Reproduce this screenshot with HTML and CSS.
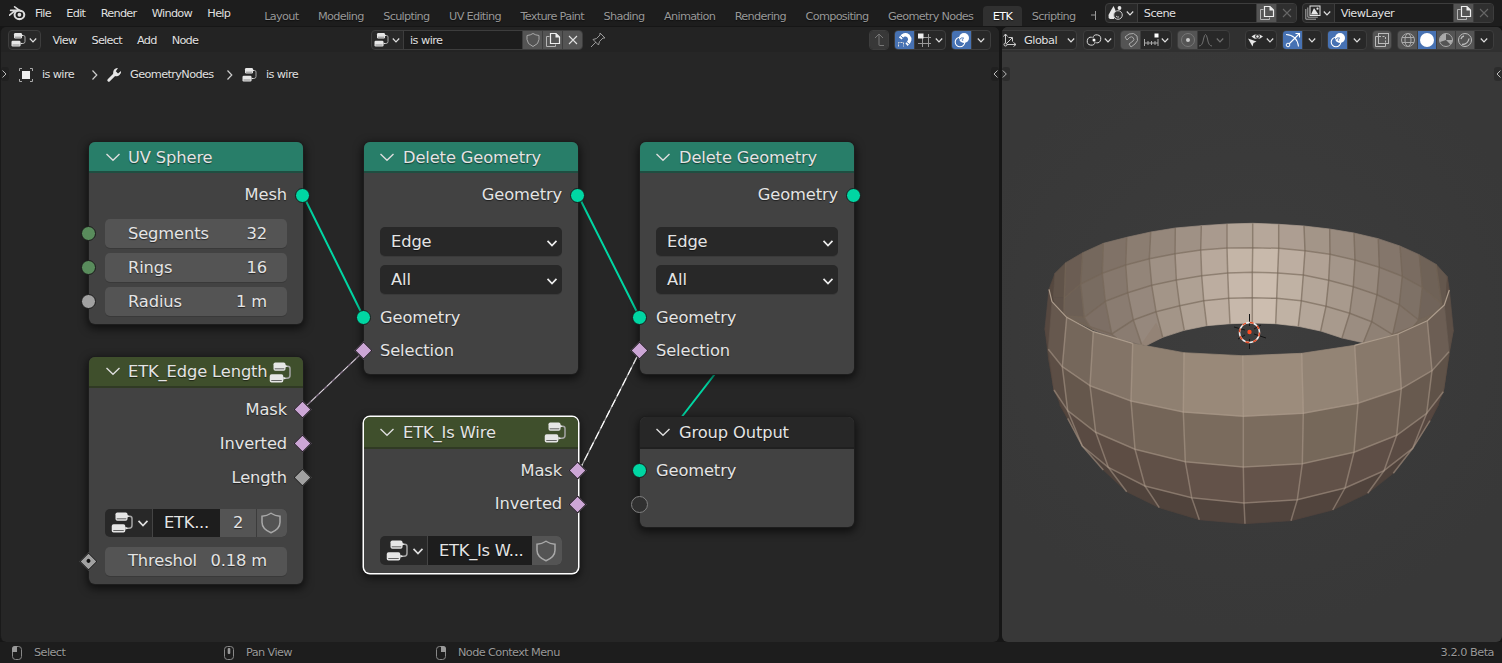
FILE: index.html
```html
<!DOCTYPE html>
<html lang="en">
<head>
<meta charset="utf-8">
<title>Geometry Nodes</title>
<link rel="stylesheet" href="styles.css">
</head>
<body>
<svg class="defs" width="0" height="0">
  <symbol id="tree" viewBox="0 0 16 16"><path d="M11 3.500h1.500q1.500 0 1.500 1.500v4.500q0 2-2 2h-2" fill="none" stroke="#a5a5a5"/><path d="M10.500 2.500l2 1-2 1zM9.500 10.500l2 1-2 1z" fill="#e6e6e6"/><rect x="3" y="1" width="8" height="5.500" rx="1.200" fill="#e6e6e6"/><rect x=".5" y="8.800" width="9" height="5.600" rx="1.200" fill="#e6e6e6"/><path d="M3.800 5.200h6.400M1.500 13h7" stroke="#555" stroke-width=".6"/></symbol>
  <symbol id="down" viewBox="0 0 10 10"><path d="M1.800 3.500L5 6.800 8.200 3.500" fill="none" stroke="currentColor" stroke-width="1.200"/></symbol>
  <symbol id="thin" viewBox="0 0 18 18"><path d="M2.500 6L9 12.300 15.500 6" fill="none" stroke="currentColor" stroke-width="1.400"/></symbol>
  <symbol id="shield" viewBox="0 0 16 16"><path d="M8 1.500q2.500 1.700 6 2v4q0 4.500-6 7-6-2.500-6-7v-4q3.500-.3 6-2z" fill="none" stroke="#a8a8a8" stroke-width="1"/></symbol>
  <symbol id="copy" viewBox="0 0 16 16"><path d="M4.500 4.500h-3v10h9v-2" fill="none" stroke="#b5b5b5"/><path d="M5.500 1.500h5.500l3.500 3.500v6.500h-9z" fill="none" stroke="#eee" stroke-width="1.200"/><path d="M10.500 1v4.500h4.500z" fill="#eee"/></symbol>
  <symbol id="cross" viewBox="0 0 16 16"><path d="M4 4l8 8M12 4l-8 8" stroke="currentColor" stroke-width="1.100"/></symbol>
  <symbol id="overlay" viewBox="0 0 16 16"><circle cx="10" cy="6" r="5" fill="#fff"/><circle cx="6" cy="10" r="4.800" fill="none" stroke="#fff" stroke-width="1.100"/><path d="M5.500 7.500Q7.500 5 10 6.200" fill="none" stroke="#4772b3"/><circle cx="8.500" cy="8" r=".8" fill="#4772b3"/></symbol>
</svg>

<header class="topbar">
  <svg class="logo" viewBox="0 0 16 16"><path d="M5.300 1.700l6 4.400M.5 9.500l5.600-4.400h4M1.500 5.100h6" fill="none" stroke="#ddd" stroke-width="1.500" stroke-linecap="round"/><ellipse cx="9.800" cy="9.200" rx="4.600" ry="4.100" fill="none" stroke="#ddd" stroke-width="1.900"/><circle cx="9.800" cy="9.200" r="1.800" fill="#ddd"/></svg>
  <nav class="menus"><span>File</span><span>Edit</span><span>Render</span><span>Window</span><span>Help</span></nav>
  <nav class="tabs"><span>Layout</span><span>Modeling</span><span>Sculpting</span><span>UV Editing</span><span>Texture Paint</span><span>Shading</span><span>Animation</span><span>Rendering</span><span>Compositing</span><span>Geometry Nodes</span><span class="current">ETK</span><span>Scripting</span><svg class="plus" viewBox="0 0 6 16"><path d="M0 8h5M4.500 4v9" stroke="#999" fill="none"/></svg></nav>
  <div class="idblocks">
    <div class="group scene"><span class="cell pick"><svg class="ic" viewBox="0 0 16 16"><path d="M5.500 1Q8 5 8 9l-2 5H2Q0 13 .5 10 2 7 5.500 1z" fill="#e6e6e6"/><circle cx="11.500" cy="3" r="1.900" fill="#e6e6e6"/><circle cx="10" cy="10" r="4.300" fill="#303030" stroke="#ccc"/><path d="M8 11q1 1.500 3 1" stroke="#ccc" fill="none"/></svg><svg class="dn"><use href="#down"/></svg></span><span class="cell name">Scene</span><span class="cell lit"><svg class="ic"><use href="#copy"/></svg></span><span class="cell dim"><svg class="ic"><use href="#cross"/></svg></span></div>
    <div class="group scene"><span class="cell pick"><svg class="ic" viewBox="0 0 16 16"><path d="M.8 4v10.200H11M2.800 2.500v9.700h10" fill="none" stroke="#aaa"/><rect x="5" y="1" width="10" height="9.500" fill="none" stroke="#e6e6e6"/><path d="M6 9.500L9 3l4.500 6.500z" fill="#e6e6e6"/><circle cx="12.500" cy="3.700" r="1.100" fill="#e6e6e6"/></svg><svg class="dn"><use href="#down"/></svg></span><span class="cell name">ViewLayer</span><span class="cell lit"><svg class="ic"><use href="#copy"/></svg></span><span class="cell dim"><svg class="ic"><use href="#cross"/></svg></span></div>
  </div>
</header>

<main class="workspace">
  <section class="area nodes">
    <div class="bar">
      <div class="bar-left"><div class="group"><span class="cell pick"><svg class="ic"><use href="#tree"/></svg><svg class="dn"><use href="#down"/></svg></span></div><nav class="menus"><span>View</span><span>Select</span><span>Add</span><span>Node</span></nav></div>
      <div class="group ident"><span class="cell pick"><svg class="ic"><use href="#tree"/></svg><svg class="dn"><use href="#down"/></svg></span><span class="cell name">is wire</span><span class="cell lit"><svg class="ic"><use href="#shield"/></svg></span><span class="cell lit"><svg class="ic"><use href="#copy"/></svg></span><span class="cell lit"><svg class="ic"><use href="#cross"/></svg></span></div>
      <svg class="ic pin" viewBox="0 0 16 16"><path d="M1 15l5-5M3 7.500l5.500 5.500 1-3.500 3.500-3.500h2L10 1v2L6.500 6.500z" fill="none" stroke="#999"/></svg>
      <div class="bar-right">
        <div class="group"><span class="cell up"><svg class="ic" viewBox="0 0 16 16"><path d="M13 13.500H8.500Q8 13.500 8 13V2M4 6l4-4 4 4" fill="none" stroke="#777"/></svg></span></div>
        <div class="group"><span class="cell on"><svg class="ic" viewBox="0 0 16 16"><path d="M3.300 6.500Q7 .8 11.300 3.800 15 8 9.500 12.600" fill="none" stroke="#fff" stroke-width="3.400"/><path d="M3.300 3.500l3.200 3M9 9.500l3.500 3" stroke="#4772b3" stroke-width="1"/><path d="M1.500 14.500v-4h5v4" fill="none" stroke="#ddd" stroke-dasharray="2 1"/></svg></span><span class="cell pick"><svg class="ic" viewBox="0 0 16 16"><path d="M1 5.500h13M1 11.500h13M5.500 2v13M11.500 2v13" stroke="#999"/><rect x="1" y="1.500" width="5.500" height="5" fill="#eee"/></svg><svg class="dn"><use href="#down"/></svg></span></div>
        <div class="group"><span class="cell on"><svg class="ic"><use href="#overlay"/></svg></span><span class="cell"><svg class="dn"><use href="#down"/></svg></span></div>
      </div>
    </div>
    <div class="crumbs">
      <svg class="edge-toggle" viewBox="0 0 8 14"><path d="M1.500 3.500L5 7l-3.500 3.500" fill="none" stroke="#bbb"/></svg>
      <svg class="ic" viewBox="0 0 16 16"><path d="M1.500 4V1.500H4M12 1.500h2.500V4M1.500 12v2.500H4M12 14.500h2.500V12" fill="none" stroke="#aaa"/><rect x="4" y="4" width="8" height="8" fill="#eee"/></svg><span class="c1">is wire</span>
      <svg class="sep" viewBox="0 0 8 12"><path d="M1.500 1.500L5.800 6l-4.300 4.500" fill="none" stroke="#ccc" stroke-width="1.200"/></svg>
      <svg class="ic" viewBox="0 0 16 16"><path d="M2.800 13.200l6-6" stroke="#e6e6e6" stroke-width="3" stroke-linecap="round"/><path d="M12 1Q8 1 7.300 4.500T9 9t4.500-1T15 4l-3 2.500L9.800 4.300z" fill="#e6e6e6"/></svg><span class="c2">GeometryNodes</span>
      <svg class="sep" viewBox="0 0 8 12"><path d="M1.500 1.500L5.800 6l-4.300 4.500" fill="none" stroke="#ccc" stroke-width="1.200"/></svg>
      <svg class="ic"><use href="#tree"/></svg><span>is wire</span>
      <svg class="edge-toggle right" viewBox="0 0 8 14"><path d="M6.500 3.500L3 7l3.500 3.500" fill="none" stroke="#bbb"/></svg>
    </div>

    <svg class="links" viewBox="0 0 999 615">
      <g transform="translate(0 -27)" fill="none">
        <path d="M303 195L364 318M578 195L640 318M853 195L640 471" stroke="#00d6a3" stroke-width="2"/>
        <path d="M303 409L364 351" stroke="#8d7b91" stroke-width="1.400"/><path d="M303 409L364 351" stroke="#ddd" stroke-width="1" stroke-dasharray="7 4"/>
        <path d="M579 471L640 351" stroke="#aaa" stroke-width="1.300"/><path d="M579 471L640 351" stroke="#fff" stroke-width="1.200" stroke-dasharray="8 4"/>
      </g>
    </svg>

    <article class="node geo n-sphere">
      <h2><svg class="fold"><use href="#thin"/></svg>UV Sphere</h2>
      <div class="row out">Mesh<i class="sock r green"></i></div>
      <div class="fields">
        <div class="field"><span>Segments</span><b>32</b><i class="sock l int"></i></div>
        <div class="field"><span>Rings</span><b>16</b><i class="sock l int"></i></div>
        <div class="field"><span>Radius</span><b>1 m</b><i class="sock l grey"></i></div>
      </div>
    </article>

    <article class="node geo n-del1">
      <h2><svg class="fold"><use href="#thin"/></svg>Delete Geometry</h2>
      <div class="row out">Geometry<i class="sock r green"></i></div>
      <div class="selects"><div class="select">Edge<svg><use href="#down"/></svg></div><div class="select">All<svg><use href="#down"/></svg></div></div>
      <div class="row">Geometry<i class="sock l green"></i></div>
      <div class="row">Selection<i class="dia l pink"></i></div>
    </article>

    <article class="node geo n-del2">
      <h2><svg class="fold"><use href="#thin"/></svg>Delete Geometry</h2>
      <div class="row out">Geometry<i class="sock r green"></i></div>
      <div class="selects"><div class="select">Edge<svg><use href="#down"/></svg></div><div class="select">All<svg><use href="#down"/></svg></div></div>
      <div class="row">Geometry<i class="sock l green"></i></div>
      <div class="row">Selection<i class="dia l pink"></i></div>
    </article>

    <article class="node grp n-edge">
      <h2><svg class="fold"><use href="#thin"/></svg>ETK_Edge Length<svg class="badge"><use href="#tree"/></svg></h2>
      <div class="row out">Mask<i class="dia r pink"></i></div>
      <div class="row out">Inverted<i class="dia r pink"></i></div>
      <div class="row out">Length<i class="dia r grey"></i></div>
      <div class="datablock"><span class="d-pick"><svg class="big"><use href="#tree"/></svg><svg class="dn"><use href="#down"/></svg></span><span class="d-name">ETK...</span><span class="d-users">2</span><span class="d-shield"><svg class="big"><use href="#shield"/></svg></span></div>
      <div class="field"><span>Threshol</span><b>0.18 m</b><i class="dia l grey dot"></i></div>
    </article>

    <article class="node grp selected n-wire">
      <h2><svg class="fold"><use href="#thin"/></svg>ETK_Is Wire<svg class="badge"><use href="#tree"/></svg></h2>
      <div class="row out">Mask<i class="dia r pink"></i></div>
      <div class="row out">Inverted<i class="dia r pink"></i></div>
      <div class="datablock"><span class="d-pick"><svg class="big"><use href="#tree"/></svg><svg class="dn"><use href="#down"/></svg></span><span class="d-name">ETK_Is W...</span><span class="d-shield"><svg class="big"><use href="#shield"/></svg></span></div>
    </article>

    <article class="node io n-out">
      <h2><svg class="fold"><use href="#thin"/></svg>Group Output</h2>
      <div class="row">Geometry<i class="sock l green"></i></div>
      <div class="row"><i class="sock l empty"></i></div>
    </article>
  </section>

  <section class="area view3d">
    <div class="bar">
      <div class="group orient"><span class="cell"><svg class="ic" viewBox="0 0 16 16"><path d="M3.500 2v10.500H14M3.500 12.500L10 6M1.500 4.500l2-2.500 2 2.500M11.500 10.500l2.500 2-2.500 2M6.500 5.500h4v4" fill="none" stroke="#ccc"/><circle cx="3.500" cy="12.500" r="1.500" fill="#303030" stroke="#ccc"/></svg><span class="global">Global</span><svg class="dn"><use href="#down"/></svg></span></div>
      <div class="group pivot"><span class="cell pick"><svg class="ic" viewBox="0 0 16 16"><path d="M6.800 6.200a4 4 0 1 1 3.400 4.600M9.200 9.800a4 4 0 1 1-3.400-4.600" fill="none" stroke="#ddd"/><circle cx="8" cy="8" r="1.500" fill="#fff"/></svg><svg class="dn"><use href="#down"/></svg></span></div>
      <div class="group snap"><span class="cell lit"><svg class="ic" viewBox="0 0 16 16"><path d="M2 5l4-3q5-2 8 2 2 5-2 8l-4 3-2-3 4-3q2-1.500 0-3.500-1.500-1.500-3.500 0L4 8z" fill="none" stroke="#aaa"/></svg></span><span class="cell pick"><svg class="ic" viewBox="0 0 16 16"><path d="M1.500 7v7M5 9v4M8.500 9v4M12 9v4M15 7v7M1.500 11H15" stroke="#aaa"/><rect x="11.500" y="1.500" width="4" height="4" fill="#fff"/></svg><svg class="dn"><use href="#down"/></svg></span></div>
      <div class="group"><span class="cell lit"><svg class="ic" viewBox="0 0 16 16"><circle cx="8" cy="8" r="6.500" fill="none" stroke="#777"/><circle cx="8" cy="8" r="2" fill="#ccc"/></svg></span><span class="cell pick faded"><svg class="ic bell" viewBox="0 0 16 16"><path d="M1 14q3.500 0 4.500-7 2-9 4 0 1 7 4.500 7" fill="none" stroke="#ddd"/></svg><svg class="dn"><use href="#down"/></svg></span></div>
      <div class="group vis"><span class="cell pick"><svg class="ic" viewBox="0 0 16 16"><path d="M3.500 4.500Q9 0 15 4.500 9 9.500 3.500 4.500z" fill="#e6e6e6"/><circle cx="9.500" cy="4.500" r="2.400" fill="#333"/><circle cx="9.500" cy="4.500" r="1.200" fill="#eee"/><path d="M0 6.500l8.500 3-3 1.500-1 3.500z" fill="#e6e6e6"/></svg><svg class="dn"><use href="#down"/></svg></span></div>
      <div class="group"><span class="cell on"><svg class="ic" viewBox="0 0 16 16"><path d="M1 2.500Q12 3 13.500 14.500M4 12L14.500 1.500M10.500 1.500h4v4" fill="none" stroke="#fff" stroke-width="1.100"/><circle cx="3" cy="13" r="1.800" fill="#4772b3" stroke="#fff"/></svg></span><span class="cell"><svg class="dn"><use href="#down"/></svg></span></div>
      <div class="group"><span class="cell on"><svg class="ic"><use href="#overlay"/></svg></span><span class="cell"><svg class="dn"><use href="#down"/></svg></span></div>
      <div class="group xray"><span class="cell lit"><svg class="ic" viewBox="0 0 16 16"><rect x="4.500" y="1.500" width="10" height="10" fill="none" stroke="#bbb"/><path d="M4 4.500H1.500v10h10V12" fill="none" stroke="#bbb"/><path d="M5 4.500h6.500v6.500" fill="none" stroke="#bbb" stroke-dasharray="2 1.500"/></svg></span></div>
      <div class="group shade"><span class="cell lit"><svg class="ic" viewBox="0 0 16 16"><g fill="none" stroke="#aaa"><circle cx="8" cy="8" r="6.500"/><ellipse cx="8" cy="8" rx="3" ry="6.500"/><path d="M2 5.500h12M2 10.500h12"/></g></svg></span><span class="cell on"><svg class="ic" viewBox="0 0 16 16"><circle cx="8" cy="8" r="7" fill="#fff"/></svg></span><span class="cell lit"><svg class="ic" viewBox="0 0 16 16"><circle cx="8" cy="8" r="6.500" fill="#555" stroke="#aaa"/><path d="M8 8V1.500A6.500 6.500 0 0 0 2 10L8 8l4.500 4.500A6.500 6.500 0 0 0 14.500 8z" fill="#aaa"/></svg></span><span class="cell lit"><svg class="ic" viewBox="0 0 16 16"><circle cx="8" cy="8" r="6.500" fill="#555" stroke="#bbb"/><path d="M4 7a4 4 0 0 1 3-3M5 12.500q6 0 7-6" fill="none" stroke="#bbb" stroke-width="1.300"/></svg></span><span class="cell"><svg class="dn"><use href="#down"/></svg></span></div>
    </div>
    <svg class="edge-toggle vleft" viewBox="0 0 8 14"><path d="M.8 3.500L4.300 7 .8 10.500" fill="none" stroke="#bbb"/></svg>
    <svg class="edge-toggle vright" viewBox="0 0 8 14"><path d="M6.500 3.500L3 7l3.500 3.500" fill="none" stroke="#bbb"/></svg>
    <svg class="scene3d" viewBox="1002 27 500 615">
      <g id="mesh"></g>
      <g class="cursor3d"><path d="M1249.500 314v12M1249.500 339v10M1234 327l11 3M1254 334l12 4M1238 339l7-4M1254 329l7-4"/><circle class="ring" cx="1249.500" cy="332.500" r="10"/><circle class="ring dash" cx="1249.500" cy="332.500" r="10"/><circle class="mid" cx="1249.500" cy="332" r="2.200"/></g>
    </svg>
  </section>
</main>

<footer class="status">
  <span class="hint"><svg viewBox="0 0 12 16"><rect x="1.500" y="1.500" width="9" height="13" rx="3" fill="none" stroke="#888"/><path d="M1 7V4q0-3 3-3h2v6z" fill="#999"/></svg>Select</span>
  <span class="hint"><svg viewBox="0 0 12 16"><rect x="1.500" y="1.500" width="9" height="13" rx="3" fill="none" stroke="#888"/><rect x="4.700" y="3" width="2.600" height="6" rx="1" fill="#999"/></svg>Pan View</span>
  <span class="hint"><svg viewBox="0 0 12 16"><rect x="1.500" y="1.500" width="9" height="13" rx="3" fill="none" stroke="#888"/><path d="M6 1h2q3 0 3 3v3H6z" fill="#999"/></svg>Node Context Menu</span>
  <span class="version">3.2.0 Beta</span>
</footer>
<script src="mesh.js"></script>
</body>
</html>
```
FILE: styles.css
```css
* { box-sizing: border-box; }
body { margin: 0; width: 1502px; height: 663px; overflow: hidden; background: #161616; color: #e0e0e0; font: 11.300px/14px "DejaVu Sans", sans-serif; letter-spacing: -.72px; text-shadow: 0 1px 1px #0008; display: flex; flex-direction: column; }
svg { display: block; flex: none; }
.defs { position: absolute; }
.ic { width: 16px; height: 16px; }
.dn { width: 10px; height: 10px; color: #ddd; }

.topbar { height: 26px; flex: none; background: #1d1d1d; display: flex; }
.logo { width: 17px; height: 17px; margin: 5px 0 0 9px; }
.menus { display: flex; gap: 15px; white-space: nowrap; padding-top: 1px; }
.topbar .menus { width: 228px; padding: 7px 0 0 9px; gap: 15.300px; }
.tabs { display: flex; width: 844px; overflow: hidden; padding-top: 6px; color: #989898; white-space: nowrap; }
.tabs span { padding: 4px 9.800px 0; height: 20px; }
.tabs span:first-child { padding-left: 10.300px; }
.tabs .current { background: #303030; color: #fff; border-radius: 4px 4px 0 0; }
.plus { width: 6px; height: 16px; margin-left: 6px; margin-top: 1px; }
.idblocks { display: flex; gap: 5px; padding-top: 3px; margin-left: 7px; }

.group { display: flex; height: 20px; flex: none; border: 1px solid #3d3d3d; border-radius: 4px; background: #282828; overflow: hidden; }
.cell { display: flex; align-items: center; justify-content: center; width: 19px; border-left: 1px solid #3d3d3d; }
.cell:first-child { border-left: 0; width: 19px; }
.cell.pick, .cell.pick:first-child { width: 31px; gap: 1px; }
.cell.name { background: #1d1d1d; justify-content: flex-start; padding-left: 6px; padding-top: 1px; width: 120px; letter-spacing: -.55px; }
.cell.lit { background: #545454; }
.cell.on { background: #4772b3; }
.cell.dim { background: #2f2f2f; color: #666; }
.cell.up:first-child { background: #383838; width: 18px; }
.faded .ic, .faded .dn { opacity: .4; }
.scene { width: 192px; }
.scene .lit, .scene .dim, .ident .lit { width: 20px; }

.workspace { flex: 1; min-height: 0; display: grid; grid-template-columns: 999px 500px; gap: 3px; margin-top: 1px; }
.area { position: relative; border-radius: 6px; overflow: hidden; height: 615px; }
.nodes { background: #262626; border-left: 1px solid #1a1a1a; }
.bar { height: 25px; padding-top: 1px; display: flex; align-items: center; background: #232323; }
.bar-left { width: 370px; padding-left: 7px; display: flex; align-items: center; gap: 11.500px; flex: none; }
.ident { width: 212px; }
.ident .name { width: 119px; }
.pin { margin-left: 7px; }
.bar-right { margin-left: auto; padding-right: 8px; display: flex; gap: 5px; }
.bar-right .pick { width: 31px; }
.crumbs { height: 44px; padding-top: 1px; display: flex; align-items: center; position: relative; padding-left: 17px; letter-spacing: -.62px; }
.crumbs span { margin-left: 8px; white-space: nowrap; }
.c1 { width: 49px; }
.c2 { width: 95px; }
.sep { width: 8px; height: 12px; margin-right: 7px; }
.c2 + .sep { margin-left: 1px; margin-right: 8px; }
.edge-toggle { position: absolute; left: 0; top: 15px; width: 8px; height: 14px; background: #202020; border-radius: 3px; }
.edge-toggle.right { left: auto; right: 0; }
.vleft { top: 40px; background: #2c2c2c; }
.vright { left: auto; right: 0; top: 40px; background: #2c2c2c; }
.links { position: absolute; left: -1px; top: 0; width: 999px; height: 615px; }

.node { position: absolute; width: 214px; background: #424242; border-radius: 6px; box-shadow: 0 0 0 1px #1d1d1d, 0 3px 9px 2px #0009; font-size: 16.300px; letter-spacing: -.12px; line-height: 20px; color: #e4e4e4; }
.node h2 { margin: 0; height: 31px; display: flex; align-items: center; font: inherit; padding: 2px 0 0 15px; border-radius: 6px 6px 0 0; border-bottom: 2px solid #1f4e41; background: #287e69; white-space: nowrap; position: relative; }
.node.grp h2 { background: #3f4f2c; border-color: #303a24; }
.node.io h2 { background: #272727; border-color: #202020; }
.fold { width: 18px; height: 18px; margin: -2px 7px 0 -1px; color: #ddd; }
.n-sphere .fold, .n-edge .fold { margin-left: 0; margin-right: 6px; }
.badge { position: absolute; right: 10px; top: 4px; width: 24px; height: 24px; }
.n-sphere { left: 88px; top: 115px; height: 182px; }
.n-del1 { left: 363px; top: 115px; height: 232px; }
.n-del2 { left: 639px; top: 115px; height: 232px; }
.n-edge { left: 88px; top: 329.500px; height: 227px; }
.n-wire { left: 363px; top: 390px; height: 156px; }
.n-out { left: 639px; top: 390px; height: 110px; }
.node.n-wire h2, .node.n-out h2 { height: 32px; }
.selected { box-shadow: 0 0 0 1.500px #fff, 0 3px 9px 2px #0009; }
.row { height: 34px; display: flex; align-items: center; padding: 0 16px; position: relative; }
.row.out { justify-content: flex-end; }
h2 + .row { margin-top: 5px; }
.row:not(.out) { height: 33.500px; }
.selects + .row { margin-bottom: -.500px; }
.n-wire .row.out { height: 33.500px; }
.fields { padding-top: 7px; display: grid; gap: 5px; }
.field { height: 29px; margin: 0 16px; padding: 0 20px 0 23px; display: flex; align-items: center; justify-content: space-between; background: #545454; border-radius: 5px; box-shadow: 0 1px #393939; position: relative; white-space: nowrap; }
.field b { font-weight: normal; }
.selects { display: grid; gap: 9px; padding: 15px 16px 7px; }
.select { height: 29px; background: #282828; border-radius: 5px; box-shadow: 0 1px #3a3a3a; padding: 0 3px 0 11px; display: flex; align-items: center; justify-content: space-between; }
.select svg { width: 14px; height: 14px; margin-top: 2px; color: #eee; }
.datablock { height: 28px; margin: 14px 16px 10px; display: flex; border-radius: 5px; overflow: hidden; background: #282828; }
.n-wire .datablock { height: 29px; margin-top: 15px; }
.datablock span { display: flex; align-items: center; padding-top: 1px; }
.big { width: 24px; height: 24px; }
.datablock .d-pick { width: 48px; padding-left: 6px; border-right: 1px solid #444; }
.d-pick .dn { width: 14px; height: 14px; margin-left: 1px; }
.datablock .d-name { flex: 1; background: #1d1d1d; padding-left: 11px; letter-spacing: -.25px; }
.d-users { width: 37px; justify-content: center; background: #545454; border-right: 1px solid #3c3c3c; }
.d-shield { width: 30px; justify-content: center; background: #545454; padding-right: 2px; }
.sock, .dia { position: absolute; top: 50%; width: 15px; height: 15px; margin-top: -7.500px; border: 1.500px solid #1a1a1a; }
.sock { border-radius: 50%; }
.dia { width: 13px; height: 13px; margin-top: -6.500px; transform: rotate(45deg); }
.sock.l { left: -8px; } .sock.r { right: -7px; }
.dia.l { left: -7px; } .dia.r { right: -6px; }
.field .sock.l { left: -24px; } .field .dia.l { left: -23px; }
.green { background: #00d6a3; } .int { background: #598c5c; } .grey { background: #a1a1a1; } .pink { background: #cca6d6; }
.empty { border: 1.500px solid #808080; background: #303030; width: 17px; height: 17px; margin-top: -8.500px; }
.sock.empty.l { left: -9px; }
.dot::after { content: ""; position: absolute; left: 3px; top: 3px; width: 4px; height: 4px; border-radius: 50%; background: #111; }

.view3d { background: radial-gradient(circle at 50% 50%, #3d3d3d, #383838 75%); }
.view3d .bar { background: #303030; gap: 5px; position: relative; z-index: 1; }
.orient { width: 76px; margin-left: -1px; border-radius: 0 4px 4px 0; }
.orient .cell:first-child { width: 75px; }
.global { width: 42px; margin-left: 6px; padding-top: 1px; letter-spacing: -.5px; }
.orient + .group { margin-left: 1px; }
.pivot { width: 32px; }
.snap { width: 52px; }
.snap + .group { width: 53px; }
.bell { margin-left: -3px; }
.vis { width: 32px; margin-left: 10px; }
.xray { width: 20px; }
.shade { width: 97px; }
.scene3d { position: absolute; left: 0; top: 0; width: 500px; height: 615px; }
.face { stroke-width: .7; stroke-linejoin: round; }
.inner, .outer, .rim { fill: none; stroke-linejoin: round; }
.inner { stroke: #75655799; stroke-width: 1.500; }
.outer { stroke: #b4a29180; stroke-width: 1.500; }
.rim { stroke: #ac9c8c; stroke-width: 1.200; }
.cursor3d path { stroke: #151515; fill: none; }
.ring { fill: none; stroke: #eee; stroke-width: 1.500; }
.dash { stroke: #e04b24; stroke-dasharray: 3.930 3.930; }
.mid { fill: #ff4b21; }

.status { height: 21px; flex: none; display: flex; align-items: center; background: #1d1d1d; color: #999; padding: 1px 0 0 11px; letter-spacing: -.6px; }
.hint { width: 212px; display: flex; align-items: center; gap: 11px; }
.hint svg { width: 12px; height: 16px; }
.version { margin-left: auto; padding-right: 8px; letter-spacing: -.5px; }
```
FILE: mesh.js
```javascript
// Mesh vertices are stored at three times screen scale, relative to (1030, 210).
const svgNS = "http://www.w3.org/2000/svg";
const mesh = document.getElementById("mesh");
const place = ([x, y]) => (1030 + x / 3).toFixed(1) + "," + (210 + y / 3).toFixed(1);
const draw = (tag, cls, pts, fill) => {
  const el = document.createElementNS(svgNS, tag);
  el.setAttribute("class", cls);
  el.setAttribute("points", pts.map(place).join(" "));
  if (fill) {
    el.setAttribute("fill", fill);
    el.setAttribute("stroke", fill);
  }
  mesh.appendChild(el);
};
const mix = (a, b, t) => "rgb(" + a.map((v, i) => Math.round(v + (b[i] - v) * t)).join() + ")";

// Each inner column runs from the top rim down to the hole.
const inner = [
  [[57,238],[60,260],[66,275],[80,290],[90,300]],
  [[75,190],[70,262],[75,290],[90,300],[100,310]],
  [[107,158],[103,264],[102,318],[120,325],[130,330]],
  [[158,128],[152,222],[163,322],[180,350],[190,360]],
  [[220,100],[217,190],[226,274],[245,372],[260,385]],
  [[290,82],[287,165],[293,248],[310,330],[335,404]],
  [[362,66],[358,146],[365,226],[378,305],[398,382]],
  [[436,54],[435,131],[439,210],[449,287],[463,361]],
  [[514,47],[512,120],[515,197],[521,272],[530,347]],
  [[591,42],[591,114],[593,189],[596,265],[600,341]],
  [[668,40],[668,113],[667,187],[667,263],[667,339]],
  [[746,43],[746,115],[743,189],[740,265],[737,341]],
  [[822,48],[825,122],[820,195],[814,272],[805,349]],
  [[899,57],[900,133],[896,211],[888,289],[872,363]],
  [[972,69],[975,150],[970,230],[959,310],[936,384]],
  [[1045,86],[1048,172],[1041,254],[1025,335],[1000,398]],
  [[1110,108],[1117,199],[1108,284],[1088,374],[1060,390]],
  [[1168,134],[1177,232],[1166,330],[1150,350],[1130,370]],
  [[1218,163],[1235,282],[1220,310],[1200,320],[1180,340]],
  [[1252,200],[1248,270],[1243,285],[1230,300],[1220,310]],
  [[1258,240],[1255,262],[1243,285],[1235,295],[1225,305]]
];
const dark = [82, 69, 60], pale = [207, 192, 178];
for (let c = 0; c < inner.length - 1; c++) {
  for (let r = 0; r < 4; r++) {
    const d = Math.abs(c + 0.5 - 10.2) / 10;
    const t = Math.max(0, 1 - Math.pow(d, 1.05) - (r === 0 ? 0.18 * (1 - d) : 0) - (r === 1 ? 0.03 : 0));
    draw("polygon", "face", [inner[c][r], inner[c + 1][r], inner[c + 1][r + 1], inner[c][r + 1]], mix(dark, pale, t));
  }
}
// The strip beside the hole that closes the last visible inner cell.
draw("polygon", "face", [[335,402],[348,407],[398,382],[378,340]], "rgb(147,131,118)");
inner.slice(2, 19).forEach(col => draw("polyline", "inner", col));
for (let r = 1; r < 4; r++) draw("polyline", "inner", inner.slice(2, 19).map(col => col[r]));

// Each outer column runs from the front rim to the bottom.
const outer = [
  [[57,238],[45,355],[55,440],[90,585],[135,665]],
  [[66,275],[55,418],[72,540],[113,625],[157,708]],
  [[110,322],[97,470],[113,602],[157,708],[220,780]],
  [[190,365],[180,527],[197,667],[235,772],[290,845]],
  [[308,400],[303,573],[315,718],[345,828],[388,893]],
  [[462,428],[460,606],[466,755],[485,863],[508,929]],
  [[638,437],[640,619],[640,771],[642,879],[645,941]],
  [[815,430],[820,610],[817,761],[802,869],[783,932]],
  [[974,406],[984,580],[972,727],[945,834],[908,900]],
  [[1104,372],[1114,536],[1100,676],[1062,782],[1013,850]],
  [[1192,332],[1206,482],[1190,610],[1148,715],[1090,790]],
  [[1243,285],[1257,425],[1240,545],[1200,632],[1148,715]],
  [[1258,240],[1270,360],[1257,435],[1225,585],[1185,650]]
];
const rowTint = [[157,141,125], [124,109,95], [100,83,74], [81,68,61]];
const shade = [77, 64, 57];
for (let r = 3; r >= 0; r--) {
  for (let i = 0; i < 6; i++) {
    for (const c of [i, 11 - i]) {
      const d = Math.abs(c + 0.5 - 6.2) / 6.2;
      draw("polygon", "face", [outer[c][r], outer[c + 1][r], outer[c + 1][r + 1], outer[c][r + 1]], mix(rowTint[r], shade, Math.pow(d, 1.35)));
    }
  }
}
outer.slice(2, 11).forEach(col => draw("polyline", "outer", col));
for (let r = 1; r < 4; r++) draw("polyline", "outer", outer.slice(1, 12).map(col => col[r]));
draw("polyline", "rim", outer.slice(0, 5).map(col => col[0]));
draw("polyline", "rim", outer.slice(8).map(col => col[0]));
```
